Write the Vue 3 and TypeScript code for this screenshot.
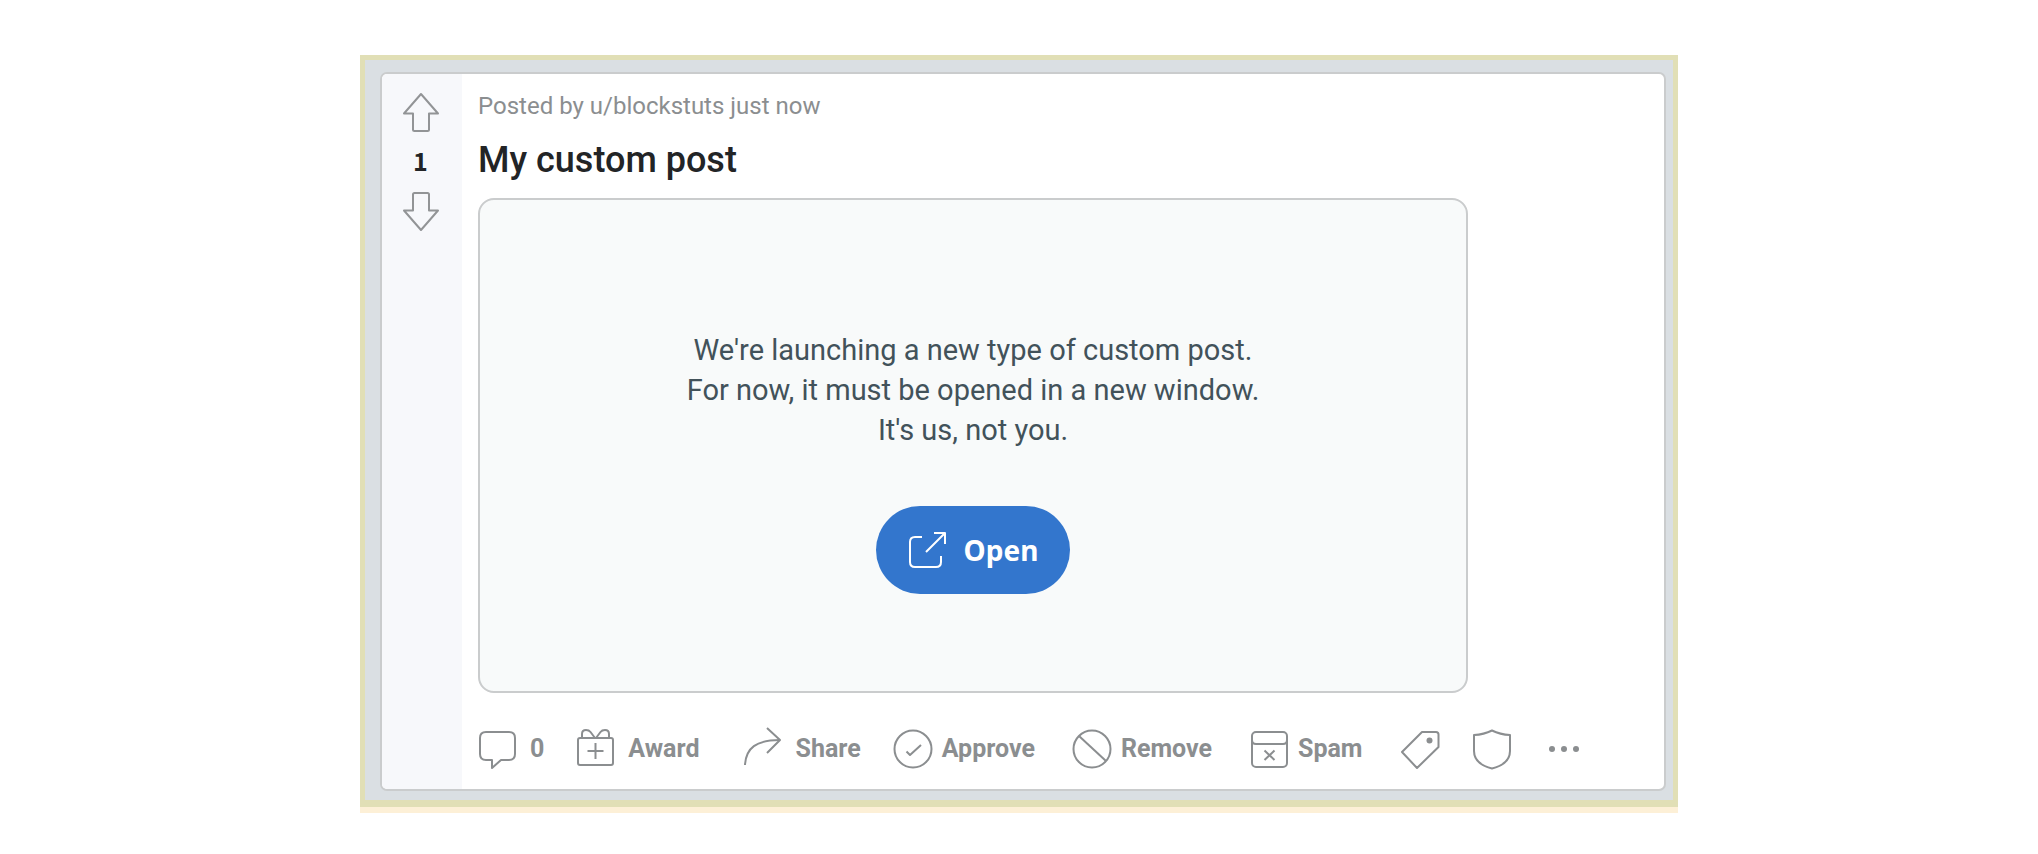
<script setup lang="ts">
import { ref } from 'vue'

interface Action {
  id: string
  label: string
  text?: string
  group: 'engage' | 'moderate' | 'more'
}

const score = ref<number>(1)

const message: string[] = [
  "We're launching a new type of custom post.",
  'For now, it must be opened in a new window.',
  "It's us, not you.",
]

const actions: Action[] = [
  { id: 'comment', label: 'Comments', text: '0', group: 'engage' },
  { id: 'award', label: 'Award', text: 'Award', group: 'engage' },
  { id: 'share', label: 'Share', text: 'Share', group: 'engage' },
  { id: 'approve', label: 'Approve', text: 'Approve', group: 'moderate' },
  { id: 'remove', label: 'Remove', text: 'Remove', group: 'moderate' },
  { id: 'spam', label: 'Spam', text: 'Spam', group: 'moderate' },
  { id: 'flair', label: 'Flair', group: 'more' },
  { id: 'shield', label: 'Moderation', group: 'more' },
  { id: 'more', label: 'More options', group: 'more' },
]
</script>

<template>
  <main class="page">
    <div class="frame">
      <article class="card">
        <aside class="votes">
          <button type="button" class="vote" aria-label="Upvote">
            <svg class="icon" viewBox="0 0 40 40" aria-hidden="true">
              <path d="M20 2 37 21.500H28V37.500Q28 39 26.500 39H13.500Q12 39 12 37.500V21.500H3Z" />
            </svg>
          </button>
          <span class="score">{{ score }}</span>
          <button type="button" class="vote" aria-label="Downvote">
            <svg class="icon" viewBox="0 0 40 40" aria-hidden="true">
              <path d="M20 38 37 18.500H28V2.500Q28 1 26.500 1H13.500Q12 1 12 2.500V18.500H3Z" />
            </svg>
          </button>
        </aside>

        <section class="body">
          <p class="meta">Posted by u/blockstuts just now</p>
          <h1 class="title">My custom post</h1>

          <div class="panel">
            <p class="message">
              <span v-for="line in message" :key="line" class="line">{{ line }}</span>
            </p>
            <button type="button" class="open">
              <svg class="icon" viewBox="0 0 40 40" aria-hidden="true">
                <path d="M14 7H7Q2 7 2 12V32Q2 37 7 37H28Q33 37 33 32V26" />
                <path d="M18 22 36 4M26 3H37V14" />
              </svg>
              Open
            </button>
          </div>

          <footer class="actions">
            <button
              v-for="a in actions"
              :key="a.id"
              type="button"
              class="action"
              :class="[a.group, a.id]"
              :aria-label="a.text ? undefined : a.label"
            >
              <svg class="icon" viewBox="0 0 40 40" aria-hidden="true">
                <path
                  v-if="a.id === 'comment'"
                  d="M8 3H31Q37 3 37 9V25Q37 31 31 31H23L14 39V31H8Q2 31 2 25V9Q2 3 8 3Z"
                />
                <g v-else-if="a.id === 'award'">
                  <rect x="2" y="9" width="35" height="27" rx="2" />
                  <path d="M19.500 14V30M11.500 22H27.500" />
                  <path d="M6 9V5Q6 1 10 1Q13 1 14.500 3L19 9M33 9V5Q33 1 29 1Q26 1 24.500 3L20 9" />
                </g>
                <g v-else-if="a.id === 'share'">
                  <path d="M2 36C3 19 13 11 37 11" />
                  <path d="M24-1 37 11 24 24" />
                </g>
                <g v-else-if="a.id === 'approve'">
                  <circle cx="20" cy="20" r="18.500" />
                  <path d="M13.500 22.500 17 26 28 16" />
                </g>
                <g v-else-if="a.id === 'remove'">
                  <circle cx="20" cy="20" r="18.500" />
                  <path d="M7 7 34 32" />
                </g>
                <g v-else-if="a.id === 'spam'">
                  <rect x="3" y="3" width="35" height="35" rx="4" />
                  <path d="M3 11Q3 15 7 15H34Q38 15 38 11" />
                  <path d="M15.500 21.500 25.500 31M25.500 21.500 15.500 31" />
                </g>
                <g v-else-if="a.id === 'flair'">
                  <path d="M22 3H36Q38.500 3 38.500 5.500V18L17 39 2 23Z" />
                  <circle class="dot" cx="29.500" cy="11.500" r="3" />
                </g>
                <path
                  v-else-if="a.id === 'shield'"
                  d="M20 1.500Q28 5.500 38 6V22Q38 35 20 39.500Q2 35 2 22V6Q12 5.500 20 1.500Z"
                />
                <g v-else class="dot">
                  <circle cx="8" cy="20" r="3" />
                  <circle cx="20" cy="20" r="3" />
                  <circle cx="32" cy="20" r="3" />
                </g>
              </svg>
              <span v-if="a.text">{{ a.text }}</span>
            </button>
          </footer>
        </section>
      </article>
    </div>
  </main>
</template>

<style>
body {
  margin: 0;
  background: #fff;
}
</style>

<style scoped>
.page {
  padding: 55px 24px 40px;
  font-family: Roboto, 'Noto Sans', sans-serif;
}

.frame {
  box-sizing: border-box;
  max-width: 1318px;
  margin: 0 auto;
  padding: 12px 7px 9px 15px;
  border: 5px solid #e1dfb6;
  border-bottom-width: 7px;
  background: #dadfe3;
  box-shadow: 0 6px 0 #fdf0d7;
}

.card {
  display: flex;
  border: 2px solid #cacccd;
  border-radius: 7px;
  background: #fff;
  overflow: hidden;
}

button {
  display: flex;
  align-items: center;
  margin: 0;
  padding: 0;
  border: 0;
  background: none;
  color: inherit;
  font: inherit;
  cursor: pointer;
}

.icon {
  flex: none;
  width: 40px;
  height: 40px;
  overflow: visible;
  fill: none;
  stroke: currentColor;
  stroke-width: 2;
  stroke-linejoin: round;
}

.dot {
  fill: currentColor;
  stroke: none;
}

.votes {
  box-sizing: border-box;
  flex: none;
  display: flex;
  flex-direction: column;
  align-items: center;
  gap: 12px;
  width: 80px;
  padding: 18px 3px 0 0;
  background: #f7f8fb;
  color: #929496;
}

.score {
  padding-bottom: 4px;
  color: #222426;
  font-family: 'Noto Sans CJK JP', sans-serif;
  font-size: 25px;
  font-weight: 700;
  line-height: 32px;
}

.body {
  flex: 1;
  min-width: 0;
  padding: 16px 16px 20px;
}

.meta {
  margin: 0;
  color: #8b8e90;
  font-size: 24px;
  line-height: 32px;
}

.title {
  margin: 16px 0;
  color: #222426;
  font-size: 36px;
  font-weight: 500;
  line-height: 44px;
}

.panel {
  box-sizing: border-box;
  display: flex;
  flex-direction: column;
  align-items: center;
  gap: 56px;
  max-width: 990px;
  padding: 130px 16px 97px;
  border: 2px solid #cacccd;
  border-radius: 16px;
  background: #f8fafa;
}

.message {
  margin: 0;
  color: #42525a;
  font-size: 29px;
  line-height: 40px;
  text-align: center;
}

.line {
  display: block;
}

.open {
  gap: 16px;
  padding: 24px 32px;
  border-radius: 45px;
  background: #3376cd;
  color: #fff;
  font-family: 'Noto Sans', sans-serif;
  font-size: 28px;
  font-weight: 700;
  line-height: 40px;
}

.actions {
  display: flex;
  flex-wrap: wrap;
  gap: 32px;
  margin-top: 36px;
  color: #8b8e90;
  font-size: 25px;
  font-weight: 700;
  line-height: 40px;
}

.action {
  gap: 12px;
}

.share {
  margin-left: 12px;
}

.moderate {
  gap: 9px;
  margin-right: 5px;
}
</style>
